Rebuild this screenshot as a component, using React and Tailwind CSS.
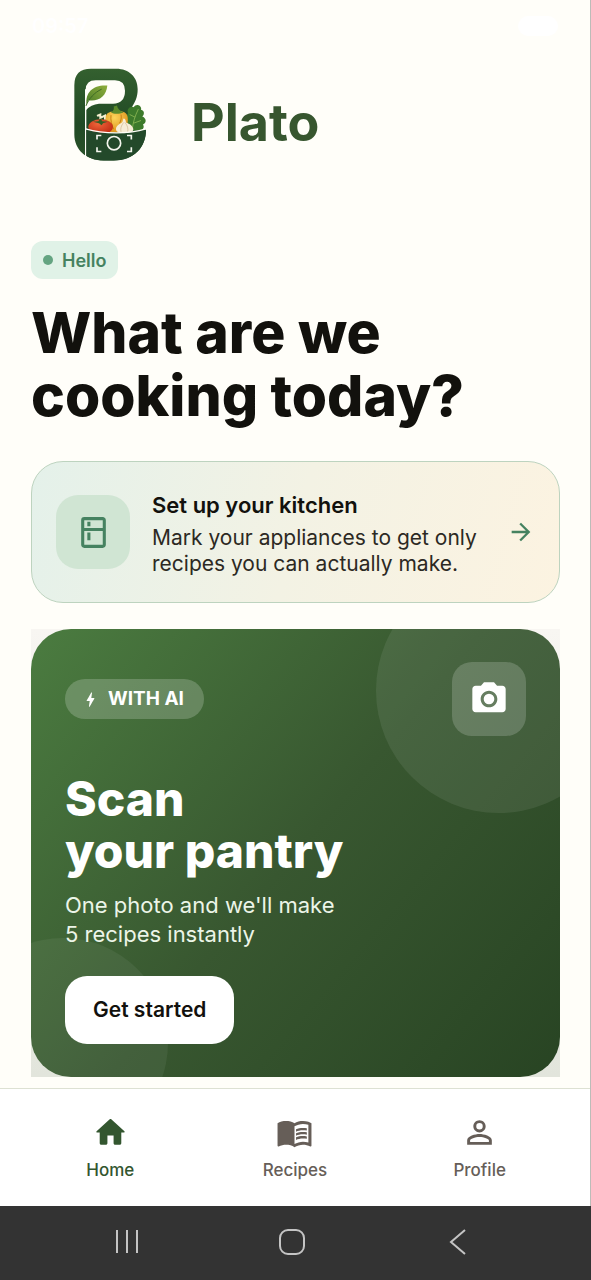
import React from "react";
import {
  MdArrowForward,
  MdBolt,
  MdMenuBook,
  MdOutlineKitchen,
  MdPersonOutline,
  MdPhotoCamera,
} from "react-icons/md";

function PlatoLogo() {
  return (
    <svg viewBox="38 22 222 284" className="w-[74px] h-[95px]" role="img" aria-label="Plato logo">
      <defs>
        <linearGradient id="logoGreen" x1="0" y1="0" x2="0" y2="1">
          <stop offset="0" stopColor="#34602f" />
          <stop offset="0.6" stopColor="#214a25" />
          <stop offset="1" stopColor="#2a522a" />
        </linearGradient>
        <linearGradient id="leafGreen" x1="1" y1="0" x2="0" y2="1">
          <stop offset="0" stopColor="#8fae3c" />
          <stop offset="1" stopColor="#4b7d2a" />
        </linearGradient>
        <radialGradient id="tomatoRed" cx="0.4" cy="0.3" r="0.8">
          <stop offset="0" stopColor="#f0653a" />
          <stop offset="1" stopColor="#b9240f" />
        </radialGradient>
        <radialGradient id="pepperYellow" cx="0.4" cy="0.3" r="0.8">
          <stop offset="0" stopColor="#fcd45a" />
          <stop offset="1" stopColor="#d98a14" />
        </radialGradient>
      </defs>
      {/* letter body */}
      <path
        d="M42 76Q42 27 92 27H168C206 27 232 52 232 88C232 112 224 128 214 142L200 210H257C257 262 222 302 160 302H130C78 302 42 270 42 224Z"
        fill="url(#logoGreen)"
      />
      <path
        d="M76 152V90Q76 61 106 61H164Q194 61 194 93Q194 131 158 132H116Q92 134 76 152Z"
        fill="#fffef9"
      />
      <path d="M76 88V296" stroke="#fffef9" strokeWidth="4" />
      {/* leaf */}
      <path d="M79 134C74 96 100 74 141 77C138 112 112 126 84 121Z" fill="url(#leafGreen)" />
      <path d="M77 138C86 116 102 98 124 88" stroke="#3f6b24" strokeWidth="3" fill="none" />
      {/* greens */}
      <path
        d="M205 212C196 192 196 172 203 160C198 148 210 138 220 142C228 128 246 138 242 150C254 152 252 166 246 170C260 176 258 190 248 194C254 204 246 212 238 212Z"
        fill="#3d7a2b"
      />
      <path d="M216 208C218 188 224 168 234 148M220 190L242 182M224 172L208 164" stroke="#7fae4e" strokeWidth="3" fill="none" />
      {/* pepper */}
      <path d="M110 168L120 164V174L134 167V180" stroke="#f5efcf" strokeWidth="6" fill="none" />
      <path
        d="M136 174C136 158 152 152 165 158C180 150 200 156 202 172C205 192 196 214 180 218H150C136 210 134 190 136 174Z"
        fill="url(#pepperYellow)"
      />
      <path d="M152 166C150 180 154 196 160 208M182 164C184 174 182 182 178 190" stroke="#c97d12" strokeWidth="3" fill="none" />
      <path d="M152 158C160 154 162 146 160 140L170 137C171 146 178 152 190 158C178 162 162 164 152 158Z" fill="#5c8a2c" />
      {/* tomato */}
      <ellipse cx="121" cy="201" rx="37" ry="23" fill="url(#tomatoRed)" />
      <path d="M98 186L114 184L120 176L126 184L142 186L128 190L124 196L116 190Z" fill="#355f24" />
      {/* garlic */}
      <path
        d="M190 176C194 176 196 180 197 188C208 192 218 198 219 208C218 218 206 220 192 220C176 220 166 216 167 206C168 196 180 192 186 187C188 182 188 178 190 176Z"
        fill="#f7ecd6"
      />
      <path d="M190 188C182 198 180 206 182 216M194 188C202 198 204 206 202 216" stroke="#cdb48c" strokeWidth="2" fill="none" />
      {/* bowl */}
      <path d="M78 209C130 225 205 225 257 209C257 262 222 302 160 302H130C108 302 92 297 78 288Z" fill="#23492a" />
      <path d="M76 207C130 223 205 223 257 207" stroke="#fffef9" strokeWidth="4" fill="none" />
      <circle cx="161" cy="250" r="20" stroke="#f4f6ee" strokeWidth="5" fill="none" />
      <path
        d="M123 227H110V239M200 227H213V239M110 262V275H123M213 262V275H200"
        stroke="#f4f6ee"
        strokeWidth="5"
        fill="none"
      />
    </svg>
  );
}

function HomeIcon() {
  return (
    <svg viewBox="0 0 24 24" fill="currentColor" className="size-[37px]" aria-hidden="true">
      <path d="M10 19v-5h4v5c0 .55.45 1 1 1h3c.55 0 1-.45 1-1v-7h1.7c.46 0 .68-.57.33-.87L12.5 3.4c-.3-.25-.7-.25-1 0l-8.53 7.73c-.34.3-.13.87.33.87H5v7c0 .55.45 1 1 1h3c.55 0 1-.45 1-1z" />
    </svg>
  );
}

const tabs = [
  { label: "Home", icon: <HomeIcon />, color: "text-[#33562f]" },
  { label: "Recipes", icon: <MdMenuBook className="size-[37px]" />, color: "text-[#665e58]" },
  { label: "Profile", icon: <MdPersonOutline className="size-[37px]" />, color: "text-[#665e58]" },
];

function StatusBar() {
  return (
    <div className="h-[52px] px-8 flex items-center justify-between text-white text-xl font-semibold">
      <span>09:57</span>
      <span className="w-10 h-5 rounded-full bg-white" />
    </div>
  );
}

function KitchenCard() {
  return (
    <button
      type="button"
      className="mt-[34px] w-full min-h-[142px] px-6 flex items-center text-left rounded-[32px] border border-[#bdd3bf] bg-linear-[105deg] from-[#e4f1ea] via-[#f3f2e4] to-[#fcf3e1]"
    >
      <span className="size-[74px] shrink-0 rounded-[22px] bg-[#d0e5d3] text-[#458260] flex items-center justify-center">
        <MdOutlineKitchen className="size-[37px]" />
      </span>
      <span className="ml-[22px] pt-1 flex-1">
        <span className="block text-[22px] leading-[26px] font-semibold text-[#12110d]">Set up your kitchen</span>
        <span className="block mt-[7px] text-[21px] leading-[26px] text-[#2c2923]">
          Mark your appliances to get only recipes you can actually make.
        </span>
      </span>
      <MdArrowForward className="size-7 shrink-0 text-[#458260]" />
    </button>
  );
}

function ScanCard() {
  return (
    <section className="mt-[26px] bg-linear-to-b from-[#f8f6f2] to-[#e2e5dc]">
      <div className="relative overflow-hidden rounded-[40px] px-[34px] py-[33px] bg-linear-[130deg] from-[#4b7c40] via-[#385730] to-[#284423]">
        <div className="absolute -top-[61px] -right-[61px] size-[245px] rounded-full bg-white/8" />
        <div className="absolute -bottom-[71px] -left-[73px] size-[210px] rounded-full bg-white/6" />

        <div className="relative flex items-center justify-between">
          <span className="h-10 pl-4 pr-5 flex items-center gap-2 rounded-full bg-white/20 text-white text-[19px] font-bold">
            <MdBolt className="size-[19px]" />
            WITH AI
          </span>
          <span className="size-[74px] rounded-[20px] bg-white/18 text-white flex items-center justify-center">
            <MdPhotoCamera className="size-10" />
          </span>
        </div>

        <h2 className="relative mt-[37px] text-[48px] leading-[52px] font-extrabold text-white">
          Scan
          <br />
          your pantry
        </h2>
        <p className="relative mt-[14px] text-[22px] leading-[29px] text-[#ecf5e8]">
          One photo and we'll make
          <br />
          5 recipes instantly
        </p>
        <button
          type="button"
          className="relative mt-[27px] h-[68px] px-7 block rounded-[22px] bg-white text-[21px] font-semibold text-[#12110d]"
        >
          Get started
        </button>
      </div>
    </section>
  );
}

function TabBar() {
  return (
    <nav className="h-[118px] px-[18px] pt-[25px] grid grid-cols-3 bg-white border-t border-[#dde1d3]">
      {tabs.map((tab) => (
        <a key={tab.label} href="#" className={`flex flex-col items-center ${tab.color}`}>
          <span className="h-9 flex items-center justify-center">{tab.icon}</span>
          <span className="mt-2 text-[17px] leading-6 font-medium">{tab.label}</span>
        </a>
      ))}
    </nav>
  );
}

function SystemBar() {
  return (
    <div className="h-[74px] pl-11 pr-[50px] pb-[3px] grid grid-cols-3 items-center justify-items-center bg-[#333333] text-[#c4c4c4]">
      <button type="button" aria-label="Recent apps">
        <svg viewBox="0 0 26 26" className="size-[26px]" fill="none" stroke="currentColor" strokeWidth="2">
          <path d="M3 1v23M13 1v23M23 1v23" />
        </svg>
      </button>
      <button type="button" aria-label="Home screen">
        <svg viewBox="0 0 26 26" className="size-[26px]" fill="none" stroke="currentColor" strokeWidth="2">
          <rect x="1" y="1" width="24" height="24" rx="8" />
        </svg>
      </button>
      <button type="button" aria-label="Back">
        <svg viewBox="0 0 26 26" className="size-[26px]" fill="none" stroke="currentColor" strokeWidth="2">
          <path d="M20 1L6 13l14 12" />
        </svg>
      </button>
    </div>
  );
}

function App() {
  return (
    <div className="min-h-screen flex flex-col bg-[#fffef9] font-[Inter,sans-serif]">
      <div className="flex-1 flex flex-col border-r border-[#bcbcb8]">
        <StatusBar />
        <header className="pt-[15px] pl-[73px] flex items-center gap-11">
          <PlatoLogo />
          <span className="pt-4 text-[52px] leading-[60px] font-bold text-[#37562f]">Plato</span>
        </header>

        <main className="flex-1 pt-[79px] pl-[31px] pr-[30px] pb-[11px]">
          <span className="inline-flex h-[38px] px-3 items-center gap-[9px] rounded-xl bg-[#e0f2e7] text-[#458260] text-[18px] font-semibold align-top">
            <span className="size-[10px] rounded-full bg-[#64a481]" />
            Hello
          </span>
          <h1 className="mt-[22px] text-[57px] leading-[63px] font-extrabold text-[#12110d]">
            What are we
            <br />
            cooking today?
          </h1>
          <KitchenCard />
          <ScanCard />
        </main>

        <TabBar />
      </div>
      <SystemBar />
    </div>
  );
}

export default App;
